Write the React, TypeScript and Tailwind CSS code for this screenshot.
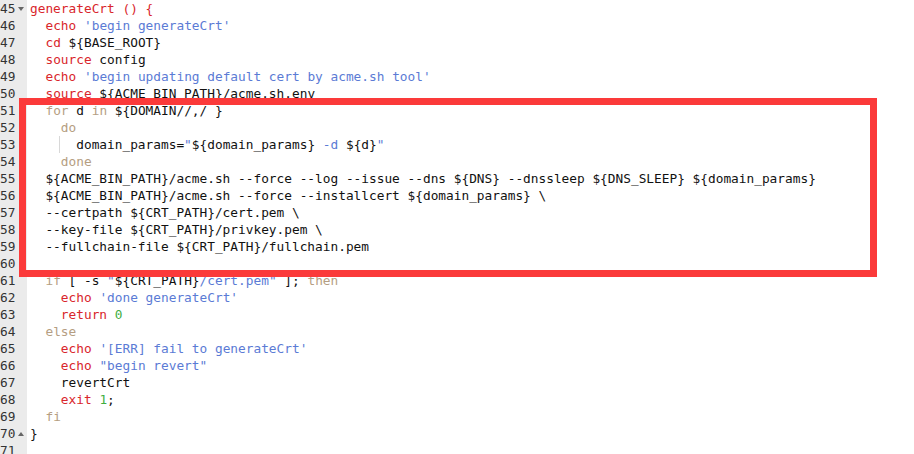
type Tok = [string, string?]

const RED = 'text-[#d9262c]'
const KW = 'text-[#b59e82]'
const STR = 'text-[#5b7bd5]'
const NUM = 'text-[#3fae3f]'

const lines: { n: number; fold?: 'down' | 'up'; guide?: boolean; toks: Tok[] }[] = [
  { n: 45, fold: 'down', toks: [['generateCrt () {', RED]] },
  { n: 46, toks: [['  '], ['echo', RED], [' '], ["'begin generateCrt'", STR]] },
  { n: 47, toks: [['  '], ['cd', RED], [' ${BASE_ROOT}']] },
  { n: 48, toks: [['  '], ['source', RED], [' config']] },
  { n: 49, toks: [['  '], ['echo', RED], [' '], ["'begin updating default cert by acme.sh tool'", STR]] },
  { n: 50, toks: [['  '], ['source', RED], [' ${ACME_BIN_PATH}/acme.sh.env']] },
  { n: 51, toks: [['  '], ['for', KW], [' d '], ['in', KW], [' ${DOMAIN//,/ }']] },
  { n: 52, toks: [['    '], ['do', KW]] },
  {
    n: 53,
    guide: true,
    toks: [['      domain_params='], ['"', STR], ['${domain_params}'], [' -d ', STR], ['${d}'], ['"', STR]],
  },
  { n: 54, toks: [['    '], ['done', KW]] },
  { n: 55, toks: [['  ${ACME_BIN_PATH}/acme.sh --force --log --issue --dns ${DNS} --dnssleep ${DNS_SLEEP} ${domain_params}']] },
  { n: 56, toks: [['  ${ACME_BIN_PATH}/acme.sh --force --installcert ${domain_params} \\']] },
  { n: 57, toks: [['  --certpath ${CRT_PATH}/cert.pem \\']] },
  { n: 58, toks: [['  --key-file ${CRT_PATH}/privkey.pem \\']] },
  { n: 59, toks: [['  --fullchain-file ${CRT_PATH}/fullchain.pem']] },
  { n: 60, toks: [] },
  {
    n: 61,
    toks: [['  '], ['if', KW], [' [ -s '], ['"', STR], ['${CRT_PATH}'], ['/cert.pem"', STR], [' ]; '], ['then', KW]],
  },
  { n: 62, toks: [['    '], ['echo', RED], [' '], ["'done generateCrt'", STR]] },
  { n: 63, toks: [['    '], ['return', RED], [' '], ['0', NUM]] },
  { n: 64, toks: [['  '], ['else', KW]] },
  { n: 65, toks: [['    '], ['echo', RED], [' '], ["'[ERR] fail to generateCrt'", STR]] },
  { n: 66, toks: [['    '], ['echo', RED], [' '], ['"begin revert"', STR]] },
  { n: 67, toks: [['    revertCrt']] },
  { n: 68, toks: [['    '], ['exit', RED], [' '], ['1', NUM], [';']] },
  { n: 69, toks: [['  '], ['fi', KW]] },
  { n: 70, fold: 'up', toks: [['}']] },
  { n: 71, toks: [] },
]

function Fold({ dir }: { dir: 'down' | 'up' }) {
  return (
    <svg width="6" height="4" viewBox="0 0 6 4" className="absolute left-[18px] top-[7px]">
      {dir === 'down' ? <path d="M0 0H6L3 4Z" fill="#666" /> : <path d="M0 4H6L3 0Z" fill="#666" />}
    </svg>
  )
}

export default function App() {
  return (
    <div
      className="relative w-[914px] h-[454px] overflow-hidden bg-white text-[12.8px] text-[#111]"
      style={{ fontFamily: '"DejaVu Sans Mono", monospace' }}
    >
      <div className="flex flex-col">
        {lines.map((l) => (
          <div key={l.n} className="flex h-[17px] leading-[17px]">
            <div className="relative w-[27px] flex-shrink-0 bg-[#ebebeb] text-[#333]">
              <span className="block w-[15px] text-right whitespace-nowrap overflow-visible">{l.n}</span>
              {l.fold && <Fold dir={l.fold} />}
            </div>
            <div className="relative pl-[3px] whitespace-pre">
              {l.guide && <span className="absolute left-[32px] top-0 h-[17px] w-px bg-[#d8d8d8]" />}
              {l.toks.map(([t, c], i) => (
                <span key={i} className={c}>
                  {t}
                </span>
              ))}
            </div>
          </div>
        ))}
      </div>
      <div className="absolute left-[19px] top-[98px] w-[858px] h-[179px] border-[7px] border-[#fb3a3a]" />
    </div>
  )
}
